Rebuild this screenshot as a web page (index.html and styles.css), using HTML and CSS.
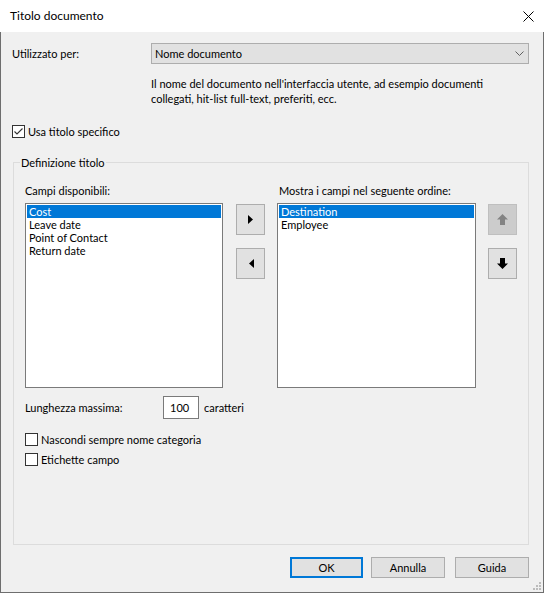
FILE: index.html
```html
<!DOCTYPE html>
<html lang="it">
<head>
<meta charset="utf-8">
<title>Titolo documento</title>
<link rel="stylesheet" href="styles.css">
</head>
<body>
<div class="window">
  <div class="titlebar">
    <span class="title">Titolo documento</span>
    <svg class="close" width="11" height="11" viewBox="0 0 11 11"><path d="M0.5 0.5 L10.5 10.5 M10.5 0.5 L0.5 10.5" stroke="#000" stroke-width="1" fill="none"/></svg>
  </div>
  <div class="client">
    <div class="used-row">
      <span class="used-label">Utilizzato per:</span>
      <div class="combo">
        <span class="combo-text">Nome documento</span>
        <svg class="chevron" width="9" height="5" viewBox="0 0 9 5"><path d="M0.5 0.5 L4.5 4.5 L8.5 0.5" stroke="#606060" stroke-width="1" fill="none"/></svg>
      </div>
    </div>
    <p class="desc">Il nome del documento nell'interfaccia utente, ad esempio documenti<br>collegati, hit-list full-text, preferiti, ecc.</p>
    <div class="check-row">
      <span class="box"><svg width="11" height="11" viewBox="0 0 11 11"><path d="M1.5 5.5 L4 8 L9.5 2.5" stroke="#333" stroke-width="1.1" fill="none"/></svg></span>
      <span>Usa titolo specifico</span>
    </div>
    <fieldset class="group">
      <legend>Definizione titolo</legend>
      <div class="lists">
        <div class="col-label">Campi disponibili:</div>
        <div class="col-label right-label">Mostra i campi nel seguente ordine:</div>
        <ul class="listbox avail">
          <li class="sel">Cost</li>
          <li>Leave date</li>
          <li>Point of Contact</li>
          <li>Return date</li>
        </ul>
        <div class="move-btns">
          <div class="sq-btn"><svg width="6" height="9" viewBox="0 0 6 9"><path d="M0 0 L5 4.5 L0 9 Z" fill="#000"/></svg></div>
          <div class="sq-btn"><svg width="6" height="9" viewBox="0 0 6 9"><path d="M6 0 L1 4.5 L6 9 Z" fill="#000"/></svg></div>
        </div>
        <ul class="listbox order">
          <li class="sel">Destination</li>
          <li>Employee</li>
        </ul>
        <div class="order-btns">
          <div class="sq-btn disabled"><svg width="11" height="11" viewBox="0 0 11 11"><path d="M5.5 0 L11 5.5 L8 5.5 L8 11 L3 11 L3 5.5 L0 5.5 Z" fill="#838383"/></svg></div>
          <div class="sq-btn"><svg width="11" height="11" viewBox="0 0 11 11"><path d="M5.5 11 L11 5.5 L8 5.5 L8 0 L3 0 L3 5.5 L0 5.5 Z" fill="#000"/></svg></div>
        </div>
      </div>
      <div class="maxlen-row">
        <span class="maxlen-label">Lunghezza massima:</span>
        <span class="textbox">100</span>
        <span class="unit">caratteri</span>
      </div>
      <div class="check-row first-opt">
        <span class="box"></span>
        <span>Nascondi sempre nome categoria</span>
      </div>
      <div class="check-row second-opt">
        <span class="box"></span>
        <span>Etichette campo</span>
      </div>
    </fieldset>
    <div class="button-row">
      <div class="btn default">OK</div>
      <div class="btn cancel">Annulla</div>
      <div class="btn">Guida</div>
    </div>
  </div>
  <svg class="grip" width="8" height="8" viewBox="0 0 8 8">
    <rect x="6" y="0" width="2" height="2" fill="#bcbcbc"/>
    <rect x="3" y="3" width="2" height="2" fill="#bcbcbc"/>
    <rect x="6" y="3" width="2" height="2" fill="#bcbcbc"/>
    <rect x="0" y="6" width="2" height="2" fill="#bcbcbc"/>
    <rect x="3" y="6" width="2" height="2" fill="#bcbcbc"/>
    <rect x="6" y="6" width="2" height="2" fill="#bcbcbc"/>
  </svg>
</div>
</body>
</html>
```

FILE: styles.css
```css
* { box-sizing: border-box; }
html, body { margin: 0; padding: 0; }
body {
  width: 544px;
  height: 593px;
  overflow: hidden;
  background: #f0f0f0;
  font-family: Lato, "Noto Sans", sans-serif;
  font-size: 11px;
  color: #000;
}
.window {
  position: relative;
  width: 544px;
  height: 593px;
  display: flex;
  flex-direction: column;
}
.titlebar {
  flex: none;
  height: 32px;
  background: #fff;
  display: flex;
  align-items: center;
  justify-content: space-between;
  padding: 0 10px 0 10px;
}
.title { font-size: 12px; line-height: 16px; }
.close { display: block; }
.client {
  flex: 1;
  border: 1px solid #6e6e6e;
  border-top: none;
  padding: 0 14px 0 11px;
  display: flex;
  flex-direction: column;
}
.used-row {
  margin-top: 11px;
  display: flex;
  align-items: center;
}
.used-label { width: 139px; line-height: 15px; }
.combo {
  flex: 1;
  height: 21px;
  background: #e1e1e1;
  border: 1px solid #adadad;
  display: flex;
  align-items: center;
  justify-content: space-between;
  padding: 0 4px 0 3px;
}
.chevron { display: block; }
.desc {
  margin: 12px 0 0 139px;
  line-height: 15px;
}
.check-row {
  display: flex;
  align-items: center;
  line-height: 15px;
  margin-top: 18px;
}
.box {
  width: 13px;
  height: 13px;
  border: 1px solid #333;
  background: #fff;
  margin-right: 3px;
  display: flex;
  align-items: center;
  justify-content: center;
  flex: none;
}
.box svg { display: block; }
.group {
  margin: 16px 0 0 1px;
  padding: 13px 10px 0 11px;
  height: 390px;
  border: 1px solid #dcdcdc;
  min-width: 0;
}
.group legend {
  padding: 0 1px;
  margin-left: -5px;
  line-height: 15px;
}
.lists {
  display: grid;
  grid-template-columns: 198px 30px 199px 29px;
  grid-template-rows: 15px 185px;
  column-gap: 12px;
  row-gap: 5px;
}
.col-label { line-height: 15px; white-space: nowrap; }
.right-label { grid-column: 3 / 5; padding-left: 2px; }
.listbox {
  margin: 0;
  padding: 1px;
  list-style: none;
  background: #fff;
  border: 1px solid #7a7a7a;
  grid-row: 2;
}
.avail { grid-column: 1; }
.order { grid-column: 3; }
.listbox li {
  height: 13px;
  line-height: 13px;
  padding-left: 2px;
  white-space: nowrap;
}
.listbox li.sel { background: #0078d7; color: #fff; }
.move-btns, .order-btns {
  grid-row: 2;
  display: flex;
  flex-direction: column;
  align-items: flex-end;
  gap: 13px;
  padding-top: 1px;
}
.move-btns { grid-column: 2; }
.order-btns { grid-column: 4; }
.sq-btn {
  width: 29px;
  height: 31px;
  background: #e1e1e1;
  border: 1px solid #adadad;
  display: flex;
  align-items: center;
  justify-content: center;
}
.sq-btn svg { display: block; }
.sq-btn.disabled { background: #cccccc; border-color: #bfbfbf; }
.maxlen-row {
  margin-top: 8px;
  display: flex;
  align-items: center;
}
.maxlen-label { width: 138px; line-height: 15px; }
.textbox {
  width: 36px;
  height: 23px;
  background: #fff;
  border: 1px solid #7a7a7a;
  padding-left: 6px;
  line-height: 21px;
}
.unit { margin-left: 5px; line-height: 15px; }
.first-opt { margin-top: 13px; }
.second-opt { margin-top: 5px; }
.button-row {
  margin-top: 12px;
  display: flex;
  justify-content: flex-end;
}
.btn {
  width: 74px;
  height: 21px;
  background: #e1e1e1;
  border: 1px solid #adadad;
  display: flex;
  align-items: center;
  justify-content: center;
}
.btn.default { width: 73px; border: 2px solid #0078d7; margin-right: 8px; }
.btn.cancel { margin-right: 10px; }
.grip {
  position: absolute;
  right: 3px;
  bottom: 3px;
  display: block;
}
```
